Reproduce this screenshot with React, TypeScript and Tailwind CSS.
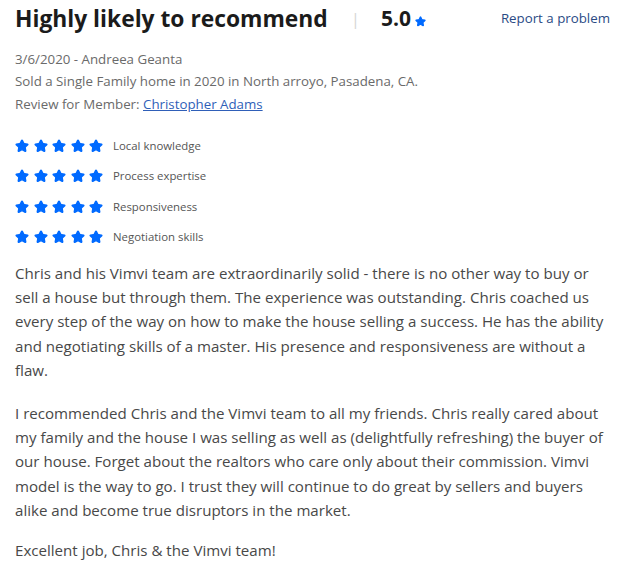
import { Star } from "lucide-react";

const categories = [
  "Local knowledge",
  "Process expertise",
  "Responsiveness",
  "Negotiation skills",
];

function Stars() {
  return (
    <div className="flex items-center gap-[4.5px]">
      {[0, 1, 2, 3, 4].map((i) => (
        <Star
          key={i}
          className="h-[14px] w-[14px] text-[#006aff]"
          fill="currentColor"
          strokeWidth={2.5}
        />
      ))}
    </div>
  );
}

export default function App() {
  return (
    <div className="bg-white px-[15px] pt-[3px] font-['Open_Sans',sans-serif] text-[#444]">
      <div className="flex items-center">
        <h2 className="text-[22.8px] font-bold leading-[30px] text-[#1b1b1b]">
          Highly likely to recommend
        </h2>
        <span className="ml-[23px] mr-[21px] text-[17px] text-[#d6d6d6]">|</span>
        <span className="text-[21px] font-bold text-[#1b1b1b]">5.0</span>
        <Star
          className="ml-[4px] mt-[6px] h-[11px] w-[11px] text-[#006aff]"
          fill="currentColor"
          strokeWidth={2.5}
        />
        <a href="#" className="ml-auto mr-[-1px] text-[13.3px] text-[#2a4a84]">
          Report a problem
        </a>
      </div>

      <div className="mt-[13px] text-[13.3px] leading-[22.5px] text-[#6a6a6a]">
        <div>3/6/2020 - Andreea Geanta</div>
        <div>Sold a Single Family home in 2020 in North arroyo, Pasadena, CA.</div>
        <div>
          Review for Member:{" "}
          <a href="#" className="text-[#2f5fb8] underline">
            Christopher Adams
          </a>
        </div>
      </div>

      <div className="mt-[24px] flex flex-col gap-[16.3px]">
        {categories.map((c) => (
          <div key={c} className="flex items-center gap-[10px]">
            <Stars />
            <span className="text-[11.4px] leading-[14px] text-[#555]">{c}</span>
          </div>
        ))}
      </div>

      <div className="mt-[17px] max-w-[593px] text-[15.1px] leading-[24.2px] text-[#484848]">
        <p>
          Chris and his Vimvi team are extraordinarily solid - there is no other way to buy or
          sell a house but through them. The experience was outstanding. Chris coached us
          every step of the way on how to make the house selling a success. He has the ability
          and negotiating skills of a master. His presence and responsiveness are without a
          flaw.
        </p>
        <p className="mt-[19px]">
          I recommended Chris and the Vimvi team to all my friends. Chris really cared about
          my family and the house I was selling as well as (delightfully refreshing) the buyer of
          our house. Forget about the realtors who care only about their commission. Vimvi
          model is the way to go. I trust they will continue to do great by sellers and buyers
          alike and become true disruptors in the market.
        </p>
        <p className="mt-[16px]">Excellent job, Chris &amp; the Vimvi team!</p>
      </div>
    </div>
  );
}
